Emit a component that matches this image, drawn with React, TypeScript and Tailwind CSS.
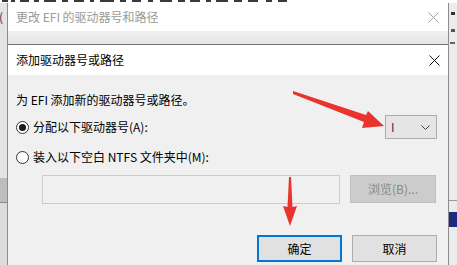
import React from "react";

function CloseX({ color }: { color: string }) {
  return (
    <svg width="11" height="11" viewBox="0 0 11 11" fill="none">
      <path d="M0.5 0.5L10.5 10.5M10.5 0.5L0.5 10.5" stroke={color} strokeWidth="1" />
    </svg>
  );
}

function Radio({ checked }: { checked?: boolean }) {
  return (
    <div className="w-[13px] h-[13px] rounded-full border border-[#333333] bg-white flex items-center justify-center shrink-0">
      {checked && <div className="w-[7px] h-[7px] rounded-full bg-[#1a1a1a]" />}
    </div>
  );
}

// fragments of the window behind, cut off at the top edge
const topBits = [
  [2, 6], [11, 4], [20, 9], [34, 5], [44, 12], [62, 6], [74, 10], [90, 4],
  [100, 14], [120, 6], [132, 9], [148, 5], [160, 12], [178, 7], [190, 10],
  [206, 5], [216, 12], [234, 8], [248, 10], [266, 6], [278, 9],
];

export default function App() {
  return (
    <div className="relative w-[457px] h-[265px] overflow-hidden bg-[#f0f0f0] flex flex-col text-[12px] text-black font-['Noto_Sans_CJK_SC','Noto_Sans',sans-serif]">
      {/* window behind, cut off at the top */}
      <div className="h-[3px] bg-white shrink-0 flex items-start">
        {topBits.map(([x, w], i) => (
          <div
            key={i}
            className="h-[2px] bg-[#3a3a3a] shrink-0"
            style={{ marginLeft: i === 0 ? x : x - (topBits[i - 1][0] + topBits[i - 1][1]), width: w }}
          />
        ))}
      </div>

      <div className="flex flex-1 min-h-0">
        {/* left strip */}
        <div className="w-[7px] flex flex-col bg-[#e4e4e4] shrink-0">
          <div className="h-[6px]" />
          <div className="text-[12px] leading-[16px] text-[#333] -ml-[1px]">(</div>
          <div className="flex-1" />
          <div className="h-[25px] bg-[#bdbdbd] border-b border-[#8a8a8a]" />
          <div className="h-[62px] bg-[#dcdcdc]" />
        </div>

        {/* dialogs */}
        <div className="flex-1 flex flex-col border-l border-r border-[#8c8c8c]">
          {/* outer dialog title */}
          <div className="h-[28px] bg-white flex items-center justify-between pl-[8px] pr-[9px] shrink-0">
            <span className="text-[#9a9a9a] leading-[16px]">更改 EFI 的驱动器号和路径</span>
            <CloseX color="#a0a0a0" />
          </div>
          <div className="h-[13px] bg-gradient-to-b from-[#f0f0f0] to-[#e6e6e6] shrink-0" />

          {/* inner dialog */}
          <div className="flex-1 flex flex-col border-t border-[#6f6f6f]">
            <div className="h-[30px] bg-white flex items-center justify-between pl-[8px] pr-[8px] shrink-0">
              <span className="leading-[16px]">添加驱动器号或路径</span>
              <CloseX color="#111111" />
            </div>

            <div className="flex-1 flex flex-col pl-[8px] pr-[11px]">
              <div className="mt-[17px] h-[16px] leading-[16px]">为 EFI 添加新的驱动器号或路径。</div>

              <div className="mt-[7px] h-[24px] flex items-center justify-between">
                <div className="flex items-center gap-[4px]">
                  <Radio checked />
                  <span className="leading-[16px]">分配以下驱动器号(A):</span>
                </div>
                <div className="w-[52px] h-[24px] bg-[#e5e5e5] border border-[#adadad] flex items-center justify-between pl-[5px] pr-[6px]">
                  <span className="text-[#333] leading-[16px]">I</span>
                  <svg width="9" height="5" viewBox="0 0 9 5" fill="none">
                    <path d="M0.5 0.5L4.5 4.5L8.5 0.5" stroke="#444" strokeWidth="1" />
                  </svg>
                </div>
              </div>

              <div className="mt-[10px] h-[16px] flex items-center gap-[4px]">
                <Radio />
                <span className="leading-[16px]">装入以下空白 NTFS 文件夹中(M):</span>
              </div>

              <div className="mt-[10px] h-[29px] flex gap-[10px] pl-[26px]">
                <div className="w-[298px] h-[29px] border border-[#cccccc] bg-[#f0f0f0]" />
                <div className="w-[86px] h-[28px] bg-[#cccccc] border border-[#bfbfbf] flex items-center justify-center text-[#8a8a8a]">
                  浏览(B)...
                </div>
              </div>

              <div className="mt-[31px] h-[27px] flex justify-end gap-[10px]">
                <div className="w-[85px] h-[27px] bg-[#e1e1e1] border-2 border-[#0078d7] flex items-center justify-center">
                  确定
                </div>
                <div className="w-[85px] h-[27px] bg-[#e1e1e1] border border-[#adadad] flex items-center justify-center">
                  取消
                </div>
              </div>
            </div>
          </div>
        </div>

        {/* right strip */}
        <div className="w-[8px] flex flex-col bg-[#ececec] shrink-0">
          <div className="h-[9px]" />
          <div className="h-[3px] w-[4px] ml-[2px] bg-[#333]" />
          <div className="h-[14px]" />
          <div className="h-[3px] w-[4px] ml-[2px] bg-[#555]" />
          <div className="h-[10px]" />
          <div className="h-[2px] w-[5px] ml-[1px] bg-[#666]" />
          <div className="h-[156px]" />
          <div className="h-[1px] bg-[#9a9a9a]" />
          <div className="h-[11px]" />
          <div className="h-[15px] bg-[#1f2a7a]" />
          <div className="flex-1" />
        </div>
      </div>

      {/* red annotation arrows */}
      <svg className="absolute inset-0 pointer-events-none" width="457" height="265" viewBox="0 0 457 265">
        <polygon
          points="293,91 366,115 368,111 384,126 362,128 364,122 293,94"
          fill="#e9332d"
        />
        <polygon
          points="289,177 291,177 292.5,207 297,206 290,226 283,206 287.5,207"
          fill="#e9332d"
        />
      </svg>
    </div>
  );
}
